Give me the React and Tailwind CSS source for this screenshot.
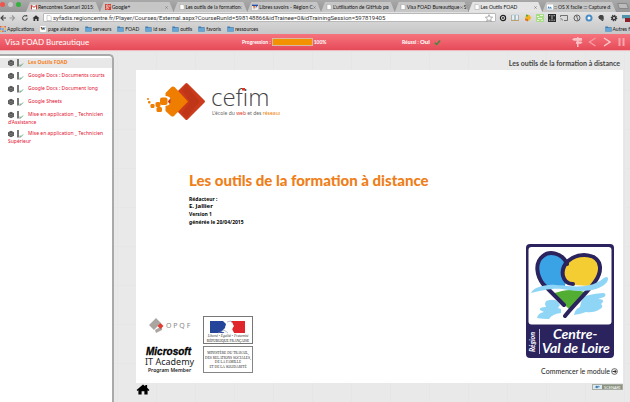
import React from "react";

const tabs = [
  { icon: "mail", label: "Rencontres Scenari 2015" },
  { icon: "gplus", label: "Google+" },
  { icon: "page", label: "Les outils de la formation" },
  { icon: "flag", label: "Libres savoirs - Région C" },
  { icon: "page", label: "L'utilisation de GitHub po" },
  { icon: "page", label: "Visa FOAD Bureautique - S" },
  { icon: "page", label: "Les Outils FOAD", active: true },
  { icon: "osx", label: ":: OS X facile ::: Capture d" },
];

const folders = ["serveurs", "FOAD", "id seo", "outils", "favoris", "ressources"];

const modules = [
  { label: "Les Outils FOAD", active: true },
  { label: "Google Docs : Documents courts" },
  { label: "Google Docs : Document long" },
  { label: "Google Sheets" },
  { label: "Mise en application _ Technicien d'Assistance" },
  { label: "Mise en application _ Technicien Supérieur" },
];

function Favicon({ name }) {
  return (
    <svg viewBox="0 0 6 6" className="size-[6px] shrink-0" aria-hidden="true">
      {name === "page" && (
        <path d="M1 .4h2.8L5.2 1.8v3.8H1z" fill="#fff" stroke="#888" strokeWidth=".4" />
      )}
      {name === "mail" && (
        <>
          <rect y=".8" width="6" height="4.6" fill="#fff" />
          <path d="M.5 5.4V1.2L3 3.4l2.5-2.2v4.2" fill="none" stroke="#d8362a" strokeWidth="1" />
        </>
      )}
      {name === "gplus" && (
        <>
          <rect width="6" height="6" fill="#d23f31" />
          <circle cx="2.3" cy="1.9" r="1" fill="none" stroke="#fff" strokeWidth=".6" />
          <ellipse cx="2.4" cy="4.3" rx="1.3" ry=".8" fill="none" stroke="#fff" strokeWidth=".6" />
          <path d="M4 2h1.6M4.8 1.2v1.6" stroke="#fff" strokeWidth=".5" />
        </>
      )}
      {name === "flag" && (
        <>
          <rect width="6" height="6" fill="#e9edf5" />
          <path d="M0 .5h6v1.5H0z" fill="#2c4da0" />
          <path d="M1 2h2.5L2 5.6z" fill="#e9762f" />
          <path d="M4 2h1.5L3.5 4.5z" fill="#3f69b7" />
        </>
      )}
      {name === "osx" && (
        <>
          <rect y=".5" width="6" height="5" fill="#fff" />
          <path d="M.4 4.6 1.7 2l1 2 .8-1.4 1.6 2z" fill="#3f86c9" />
        </>
      )}
    </svg>
  );
}

function Folder() {
  return (
    <svg viewBox="0 0 7 6" className="h-[6px] w-[7px] shrink-0" aria-hidden="true">
      <path d="M.3.6h2.4l.6.7h3.4v4.3H.3z" fill="#3f79ad" />
      <path d="M.3 2h6.4v3.6H.3z" fill="#69a5d3" />
    </svg>
  );
}

function ToolIcon({ name }) {
  return (
    <svg viewBox="0 0 8 8" className="size-[8px]" aria-hidden="true">
      {name === "target" && (
        <>
          <circle cx="4" cy="4" r="2.6" fill="#ddd" stroke="#222" strokeWidth="1.2" />
          <circle cx="4" cy="4" r=".9" fill="#222" />
        </>
      )}
      {name === "book" && (
        <>
          <path d="M0 1.2h8v5.6H0z" fill="#c99448" />
          <path d="M.6 1h3v5h-3zM4.4 1h3v5h-3z" fill="#e8f2fa" stroke="#5b9bd0" strokeWidth=".3" />
        </>
      )}
      {name === "drop" && (
        <>
          <path d="M2 .8 5.4 1l2 3-3 3L1 5.6z" fill="#f2b51e" />
          <path d="M2 .6 4 1v1.6L2 2.4z" fill="#5ba544" />
          <path d="m1 4.4 3 .6v2.4L1 6.2z" fill="#d9742a" />
        </>
      )}
      {name === "green" && (
        <>
          <rect width="8" height="8" fill="#a9dc86" />
          <path d="M1 2.5h2M4 1.5h3M2 4.5h4M1 6.5h2M5 6.3h2" stroke="#e7f8dc" />
        </>
      )}
      {name === "qr" && (
        <>
          <rect width="8" height="8" fill="#2a2a2a" />
          <path d="M1 1.7h1.4M5.5 1.7H7M3 4h2M1 6.2h1.4M5.5 6.2H7M4 1v2M4 5.4V7" stroke="#ddd" strokeWidth=".8" />
        </>
      )}
      {name === "cast" && (
        <>
          <path d="M.5 3V1.5h7v5H4" fill="none" stroke="#555" strokeWidth=".8" />
          <path d="M.5 4.5a2 2 0 0 1 2 2M.5 6h.6" fill="none" stroke="#555" strokeWidth=".6" />
        </>
      )}
      {name === "clock" && (
        <>
          <circle cx="4" cy="4" r="3" fill="none" stroke="#555" strokeWidth=".9" />
          <path d="M2.8 2.5 4 2v2l1.2 1.4L4 6" fill="none" stroke="#555" strokeWidth=".8" />
        </>
      )}
      {name === "blue" && (
        <circle cx="4" cy="4" r="2.5" fill="#fff" stroke="#4a8dc6" strokeWidth="2" />
      )}
      {name === "elephant" && (
        <path d="M1.2 2.8 3 1h2.3l1.3 1.1.2 3L6 7H4.5v-.9h1l-.2-.7-1.2.5L2 4.8z" fill="#444" />
      )}
      {name === "gear" && (
        <>
          <circle cx="4" cy="4" r="2.7" fill="none" stroke="#333" strokeWidth="1.2" strokeDasharray="1.2 .9" />
          <circle cx="4" cy="4" r="1.7" fill="none" stroke="#333" strokeWidth="1.3" />
        </>
      )}
      {name === "red" && (
        <>
          <rect y="1" width="8" height="3.4" fill="#4c94ad" />
          <rect x="3" y="4" width="5" height="4" fill="#8e2029" />
        </>
      )}
    </svg>
  );
}

const extensions = ["target", "book", "drop", "green", "qr", "cast", "clock", "blue", "elephant", "gear", "red"];

function Browser() {
  return (
    <div className="font-[Lato,sans-serif] text-[#111]">
      <div className="flex h-3 items-end bg-linear-to-b from-[#a9a9a9] to-[#969696]">
        <div className="flex h-full w-[26px] shrink-0 items-start gap-[3px] pt-[2px]">
          <span className="size-[5px] rounded-full bg-[#f0544a]" />
          <span className="size-[5px] rounded-full bg-[#c9c9c9]" />
          <span className="size-[5px] rounded-full bg-[#32b23c]" />
        </div>
        <nav className="flex min-w-0 flex-1">
          {tabs.map((t) => (
            <div
              key={t.label}
              className={
                "flex h-[10px] min-w-0 flex-1 items-center gap-[1px] pr-[5px] pl-[5px] text-[5px] leading-[8px] [clip-path:polygon(0_100%,4px_0,calc(100%-4px)_0,100%_100%)] " +
                (t.active ? "bg-[#e4e4e4]" : "bg-[#c6c6c6]")
              }
            >
              <Favicon name={t.icon} />
              <a href="#" className="min-w-0 flex-1 whitespace-nowrap">{t.label}</a>
              <button aria-label="Fermer" className="flex w-[4px] shrink-0 justify-center">
                <svg viewBox="0 0 4 4" className="size-[3px]" aria-hidden="true">
                  <path d="m.5.5 3 3m0-3-3 3" stroke="#777" strokeWidth=".9" />
                </svg>
              </button>
            </div>
          ))}
        </nav>
        <button aria-label="Nouvel onglet" className="mx-[2px] mb-[3px] h-[6px] w-[10px] skew-x-[20deg] rounded-[1px] border border-[#888] bg-[#bcbcbc]" />
      </div>
      <div className="flex h-[11px] items-center bg-linear-to-b from-[#e2e2e2] to-[#d3d3d3]">
        <div className="flex w-[43px] shrink-0 items-center">
          <svg viewBox="0 0 40 8" className="h-[8px] w-[40px]" aria-label="Navigation">
            <path d="M3.500 1.500 1 4l2.500 2.500M1 4h5" fill="none" stroke="#444" strokeWidth="1.100" />
            <path d="M12 1.500 14.500 4 12 6.500M14.500 4H9.500" fill="none" stroke="#999" strokeWidth="1.100" />
            <path d="M27.200 4A2.300 2.300 0 1 1 25.900 2" fill="none" stroke="#444" strokeWidth="1" />
            <path d="M25.200 1h2v2.300z" fill="#444" />
            <path d="m32.500 4.200 3.500-3 3.500 3h-1V7h-1.700V5h-1.600v2h-1.700V4.200z" fill="#333" />
          </svg>
        </div>
        <div className="flex h-[9px] min-w-0 flex-1 items-center gap-[1px] rounded-[1px] border border-[#b8b8b8] bg-white px-[2px]">
          <Favicon name="page" />
          <input
            aria-label="Adresse"
            className="h-[7px] min-w-0 flex-1 bg-transparent font-[Roboto,sans-serif] text-[6px] leading-[7px] text-[#333] outline-none"
            defaultValue="syfadis.regioncentre.fr/Player/Courses/External.aspx?CourseRunId=598148866&idTrainee=0&idTrainingSession=597819405"
          />
          <svg viewBox="0 0 24 24" className="size-[8px]" fill="none" stroke="#888" strokeWidth="2" aria-hidden="true">
            <path d="m12 2 3 7 8 .6-6 5 2 7.600-7-4.200-7 4.200 2-7.600-6-5 8-.6z" />
          </svg>
        </div>
        <div className="flex w-[134px] shrink-0 justify-between pl-[3px]">
          {extensions.map((n) => (
            <button key={n} aria-label={n}><ToolIcon name={n} /></button>
          ))}
        </div>
      </div>
      <div className="flex h-[11px] items-center gap-[6px] bg-linear-to-b from-[#d3d3d3] to-[#c6c6c6] text-[5px] leading-[8px]">
        <a href="#" className="flex items-center gap-[1px]">
          <svg viewBox="0 0 6 6" className="size-[6px]" aria-hidden="true">
            <path d="M0 0h1.500v1.500H0zM4.400 0h1.500v1.500H4.400zM2.200 4.400h1.500v1.500H2.200z" fill="#e3564b" />
            <path d="M2.200 0h1.500v1.500H2.200zM0 4.400h1.500v1.500H0zM4.400 2.200h1.500v1.500H4.400z" fill="#e5b33c" />
            <path d="M0 2.200h1.500v1.500H0zM2.200 2.200h1.500v1.500H2.200zM4.400 4.400h1.500v1.500H4.400z" fill="#4d90d6" />
          </svg>
          Applications
        </a>
        <a href="#" className="flex items-center gap-[2px]">
          <span className="flex size-[6px] items-center justify-center rounded-[1px] bg-white font-['Liberation_Serif',serif] font-bold">W</span>
          page aléatoire
        </a>
        {folders.map((f) => (
          <a key={f} href="#" className="flex items-center gap-[1px]">
            <Folder />
            {f}
          </a>
        ))}
        <a href="#" className="ml-auto flex items-center gap-[1px]">
          <Folder />
          Autres f
        </a>
      </div>
    </div>
  );
}

function CourseHeader() {
  return (
    <header className="flex h-[17px] items-center border-b border-[#f0b9bd] bg-linear-to-b from-[#f6737d] to-[#e64a59] pr-[4px] pl-[5px] font-[Lato,sans-serif] text-[5px] leading-[8px] text-white">
      <h1 className="w-[237px] shrink-0 text-[8px]">Visa FOAD Bureautique</h1>
      <div className="flex flex-1 items-center gap-[1px] font-bold">
        <span>Progression :</span>
        <span className="h-[8px] w-[41px] border border-[#d8b8a0] bg-[#f39200]" />
        <span>100%</span>
      </div>
      <div className="flex flex-1 items-center gap-[4px] font-bold">
        <span>Réussi : <b className="text-[6px] font-black">Oui</b></span>
        <svg viewBox="0 0 8 8" className="size-[7px]" aria-hidden="true">
          <path d="M1 4.300 3 6.300 7 1.700" fill="none" stroke="#3c8b3f" strokeWidth="1.700" />
        </svg>
      </div>
      <svg viewBox="0 0 54 12" className="ml-[10px] h-[12px] w-[54px] shrink-0" aria-label="Commandes du module">
        <g fill="#fbc3c7">
          <path d="M0 3.500 2 2h8v2.800H2z" />
          <path d="M4 5.500h5l1.500 1-1.500 1.300H4z" />
          <path d="M5 1h1.500v10H5z" />
        </g>
        <path d="m23.500 2-6 4 6 4" fill="none" stroke="#f59aa2" strokeWidth="1.500" />
        <path d="m32 2 6 4-6 4" fill="none" stroke="#fbc8cb" strokeWidth="1.500" />
        <path d="M47.500 2v8M51.500 2v8" fill="none" stroke="#f7a6ad" strokeWidth="2" />
      </svg>
    </header>
  );
}

function Sidebar() {
  return (
    <aside className="mt-[3px] w-[114px] shrink-0 rounded-tr-[5px] border-t-2 border-r-2 border-[#aaa] bg-white pt-[2px] font-['Noto_Sans',sans-serif] text-[5px] leading-[6px]">
      {modules.map((m) => (
        <a
          key={m.label}
          href="#"
          className={"block pr-[2px] pl-[8px] " + (m.active ? "mb-[4px] bg-[#e8e8e8] py-[1px] font-bold text-[#f5821f]" : "mb-[5px] text-[#e2102f]")}
        >
          <svg viewBox="0 0 16 8" className="mr-[4px] inline h-[8px] w-[16px] align-middle" aria-hidden="true">
            <path d="M0 2.300 3 .8l3 1.500v3.400L3 7.200 0 5.700z" fill="#555" />
            <path d="m.4 2.500 2.600 1.200 2.600-1.200M.4 4.300 3 5.500l2.600-1.200" fill="none" stroke="#aaa" strokeWidth=".4" />
            <path d="M9 0h2v7.500H9z" fill="#777" />
            <path d="M11 7h2" stroke="#999" />
            <path d="m12 5.500 1 1.200L15 4.500" fill="none" stroke="#4aa564" strokeWidth=".9" />
          </svg>
          {m.label}
        </a>
      ))}
    </aside>
  );
}

function CefimLogo() {
  return (
    <svg viewBox="0 0 134 42" className="h-[42px] w-[134px]" role="img" aria-label="cefim">
      <rect x="-13.500" y="-13.500" width="27" height="27" rx="1.500" transform="translate(40.500 20.500) rotate(45)" fill="#cb3a1a" />
      <path d="m40.500 4 13 16.500L40.500 37 36 32l8-11L36 9z" fill="#a92d17" opacity=".35" />
      <path d="M25 6.500q2-2 4 0l13 14-14 14.500q-1.500 1-3 0L19.500 30v-5q4-.5 5-3.500v-4q-1-2.500-5-2.500v-3z" fill="#ee7d00" />
      <g fill="#ee7d00">
        <rect x="14" y="16.500" width="7.500" height="7.500" rx="2" />
        <rect x="9.500" y="21" width="5" height="5" rx="1.500" />
        <rect x="10.500" y="26" width="5.500" height="5" rx="1.500" />
        <rect x="4.500" y="23" width="4" height="4" rx="1.200" />
        <rect x="2" y="20" width="2.500" height="2.500" rx="1" />
        <rect x="1" y="17" width="2" height="2" rx="1" />
      </g>
      <text x="65" y="25" fontFamily="Open Sans, Noto Sans, sans-serif" fontWeight="300" fontSize="24" fill="#444">cefim</text>
      <rect x="96" y="7" width="3" height="2.500" fill="#e2361c" />
      <text x="66" y="34" fontFamily="Noto Sans, sans-serif" fontSize="5" fill="#666">
        L'école du <tspan fill="#e2361c">web</tspan> et des <tspan fill="#ee7d00">réseaux</tspan>
      </text>
    </svg>
  );
}

function PartnerLogos() {
  return (
    <div className="grid grid-cols-[51px_50px] items-end gap-x-[4px] gap-y-[1px]">
      <svg viewBox="0 0 51 26" className="h-[26px] w-[51px]" role="img" aria-label="OPQF">
        <path d="m1 7 7-7 5 5-3 3-4 4zM7 12l7-4v4l-6 3z" fill="#aaa5a0" />
        <path d="m9.500 8 3-3 3 3-3 3z" fill="#e43c2f" />
        <text x="18" y="10" fontFamily="Noto Sans, sans-serif" fontSize="7" fill="#888">O P Q F</text>
      </svg>
      <svg viewBox="0 0 50 28" className="h-[28px] w-[50px]" role="img" aria-label="République Française">
        <rect x=".5" y=".5" width="49" height="27" fill="#fff" stroke="#777" />
        <path d="M7 5h13l3 3-2 9H7z" fill="#25459b" />
        <path d="M28 5h14v12H31l-2-4 2-3z" fill="#e0262c" />
        <path d="m18 16 4-4 2-5 5-1 1 3-1 5 2 3z" fill="#fff" />
        <path d="m15 17 6-3 4 3M24 6l4-1 1 2" fill="none" stroke="#8892b3" strokeWidth=".6" />
        <g fontFamily="Liberation Serif, serif" textAnchor="middle" fontSize="4" transform="translate(25 0) scale(.88)">
          <text x="0" y="24" fontStyle="italic" fill="#333">Liberté • Égalité • Fraternité</text>
          <text x="0" y="29" fill="#111">RÉPUBLIQUE FRANÇAISE</text>
        </g>
      </svg>
      <svg viewBox="0 0 51 28" className="h-[28px] w-[51px] overflow-visible" role="img" aria-label="Microsoft IT Academy">
        <text x="-2" y="10" fontFamily="Liberation Sans, sans-serif" fontWeight="700" fontStyle="italic" fontSize="10" fill="#000" stroke="#000" strokeWidth=".3">Microsoft</text>
        <text x="-3" y="20" fontFamily="Noto Sans, sans-serif" fontSize="9" fill="#222">IT Academy</text>
        <text x="0" y="27" fontFamily="Noto Sans, sans-serif" fontWeight="600" fontSize="5" fill="#222">Program Member</text>
      </svg>
      <svg viewBox="0 0 56 30" className="h-[27px] w-[50px]" role="img" aria-label="Ministère du travail">
        <rect x=".5" y=".5" width="55" height="29" fill="#fff" stroke="#777" />
        <g fontFamily="Liberation Serif, serif" fontSize="4" fill="#222" textAnchor="middle">
          <text x="28" y="9">MINISTÈRE DU TRAVAIL,</text>
          <text x="28" y="14">DES RELATIONS SOCIALES,</text>
          <text x="28" y="19">DE LA FAMILLE</text>
          <text x="28" y="24">ET DE LA SOLIDARITÉ</text>
        </g>
      </svg>
    </div>
  );
}

function RegionLogo() {
  return (
    <svg viewBox="0 0 88 114" className="h-[114px] w-[88px]" role="img" aria-label="Région Centre-Val de Loire">
      <rect width="88" height="114" rx="4" fill="#2a235e" />
      <rect x="2.500" y="3" width="83" height="77.500" rx="3" fill="#fff" />
      <path d="M41 27C39 10 24 6 17 12c-8 7-7 18-2 26l4 6c7 0 13-3 20-2z" fill="#3aa3e6" />
      <path d="M47 41c-12-2-13-16-5-24 10-9 30-9 32 5 1 8-3 15-9 20z" fill="#f3cd31" />
      <path d="M27 50c10-5 22-5 32-2L43 65z" fill="#52ae32" />
      <g fill="#8fd5f5">
        <path d="M20 57q9-3 12 1l2 3-2 3 3 1v4q-9 1-12 6-7 0-12-1 1-5 7-6l-4-2q-1-3 6-3l-1-3z" />
        <path d="M59 52q12-3 19-3 3 2 0 4l-6 2q6 0 5 3l-2 2q3 3-1 5-6 4-14 3-5 2-12 3 1-6 6-8 1-7 5-11z" />
      </g>
      <path d="M41 20C36 8 23 7 17 12c-9 7-6 20 0 28L38 61" fill="none" stroke="#2a235e" strokeWidth="4" strokeLinecap="round" />
      <path d="M47 40c-11 0-14-14-5-23 11-9 31-8 32 6 1 14-15 25-35 49" fill="none" stroke="#2a235e" strokeWidth="4" strokeLinecap="round" />
      <path d="M5 49c2-5 13-9 25-8 13 1 29 4 42-3 4-2 6-5 9-5 2 1 1 5-3 8-10 7-24 7-42 4-12-1-21 2-31 4z" fill="#8fd5f5" />
      <g fontFamily="Lato, sans-serif" fontStyle="italic" fill="#fff">
        <text x="27" y="95" fontSize="14" fontWeight="700">Centre-</text>
        <text x="16" y="109" fontSize="14" fontWeight="700">Val de Loire</text>
        <text transform="translate(9 108) rotate(-90)" fontSize="7" fontWeight="700">Région</text>
      </g>
      <path d="M13.500 85v25" stroke="#fff" strokeWidth=".7" />
    </svg>
  );
}

function Course() {
  return (
    <main className="flex min-w-0 flex-1 flex-col pt-[7px] pr-[7px] pl-[22px] font-['Noto_Sans',sans-serif]">
      <h2 className="pr-[3px] text-right font-[Lato,sans-serif] text-[7px] leading-[10px] font-bold text-[#444]">
        Les outils de la formation à distance
      </h2>
      <section className="mt-[2px] flex flex-1 flex-col bg-white pt-[11px] pr-[9px] pb-[7px] pl-[10px] text-black">
        <CefimLogo />
        <div className="mt-[47px] flex flex-col pl-[43px]">
          <h3 className="font-[Lato,sans-serif] text-[15px] leading-[20px] font-black text-[#ee7f1a]">
            Les outils de la formation à distance
          </h3>
          <div className="mt-[6px] text-[5px] leading-[8px] font-bold">
            <p className="leading-[6px]">Rédacteur :</p>
            <p className="text-[6px]">E. Jallier</p>
            <p>Version 1</p>
            <p>générée le 20/04/2015</p>
          </div>
        </div>
        <div className="mt-auto flex items-end justify-between">
          <div className="pb-[3px] pl-[2px]">
            <PartnerLogos />
          </div>
          <div className="flex flex-col items-end gap-[8px]">
            <RegionLogo />
            <a href="#" className="-mr-[4px] flex items-center gap-[1px] font-[Lato,sans-serif] text-[7px] leading-[10px] text-[#222]">
              Commencer le module
              <svg viewBox="0 0 7 7" className="size-[7px]" fill="none" stroke="#333" aria-hidden="true">
                <circle cx="3.500" cy="3.500" r="2.900" strokeWidth=".7" />
                <path d="M1.500 3.500h3.500M3.500 1.800l1.700 1.700-1.700 1.700" strokeWidth="1" />
              </svg>
            </a>
          </div>
        </div>
      </section>
      <footer className="flex h-[19px] items-start justify-between pt-[1px]">
        <a href="#" aria-label="Accueil">
          <svg viewBox="0 0 14 12" className="h-[11px] w-[14px]" aria-hidden="true">
            <path d="M0 6.500 7 .500l2.500 2V1h2v3L14 6.500l-1 1-1-.8V11.500H8.500V8h-3v3.500H2V6.700l-1 .8z" fill="#000" />
          </svg>
        </a>
        <a href="#" className="flex h-[6px] w-[31px] items-center border border-[#a9aea4] bg-[#8a917f] text-[4px] leading-[5px] text-white">
          <svg viewBox="0 0 9 5" className="h-[4px] w-[9px] bg-[#dde8ee]" aria-hidden="true">
            <circle cx="3.500" cy="2.500" r="1.600" fill="#3a7db8" />
            <circle cx="6" cy="2" r="1.200" fill="#5b9bc8" />
          </svg>
          <span className="pl-[2px]">SCENARI</span>
        </a>
      </footer>
    </main>
  );
}

export default function App() {
  return (
    <div className="flex min-h-screen flex-col bg-[#e9e9e9]">
      <Browser />
      <CourseHeader />
      <div className="flex flex-1 bg-[#e9e9e9] bg-[repeating-linear-gradient(90deg,#e6e6e6_0_1px,transparent_1px_39px),repeating-linear-gradient(#e6e6e6_0_1px,transparent_1px_39px)]">
        <Sidebar />
        <Course />
      </div>
    </div>
  );
}
